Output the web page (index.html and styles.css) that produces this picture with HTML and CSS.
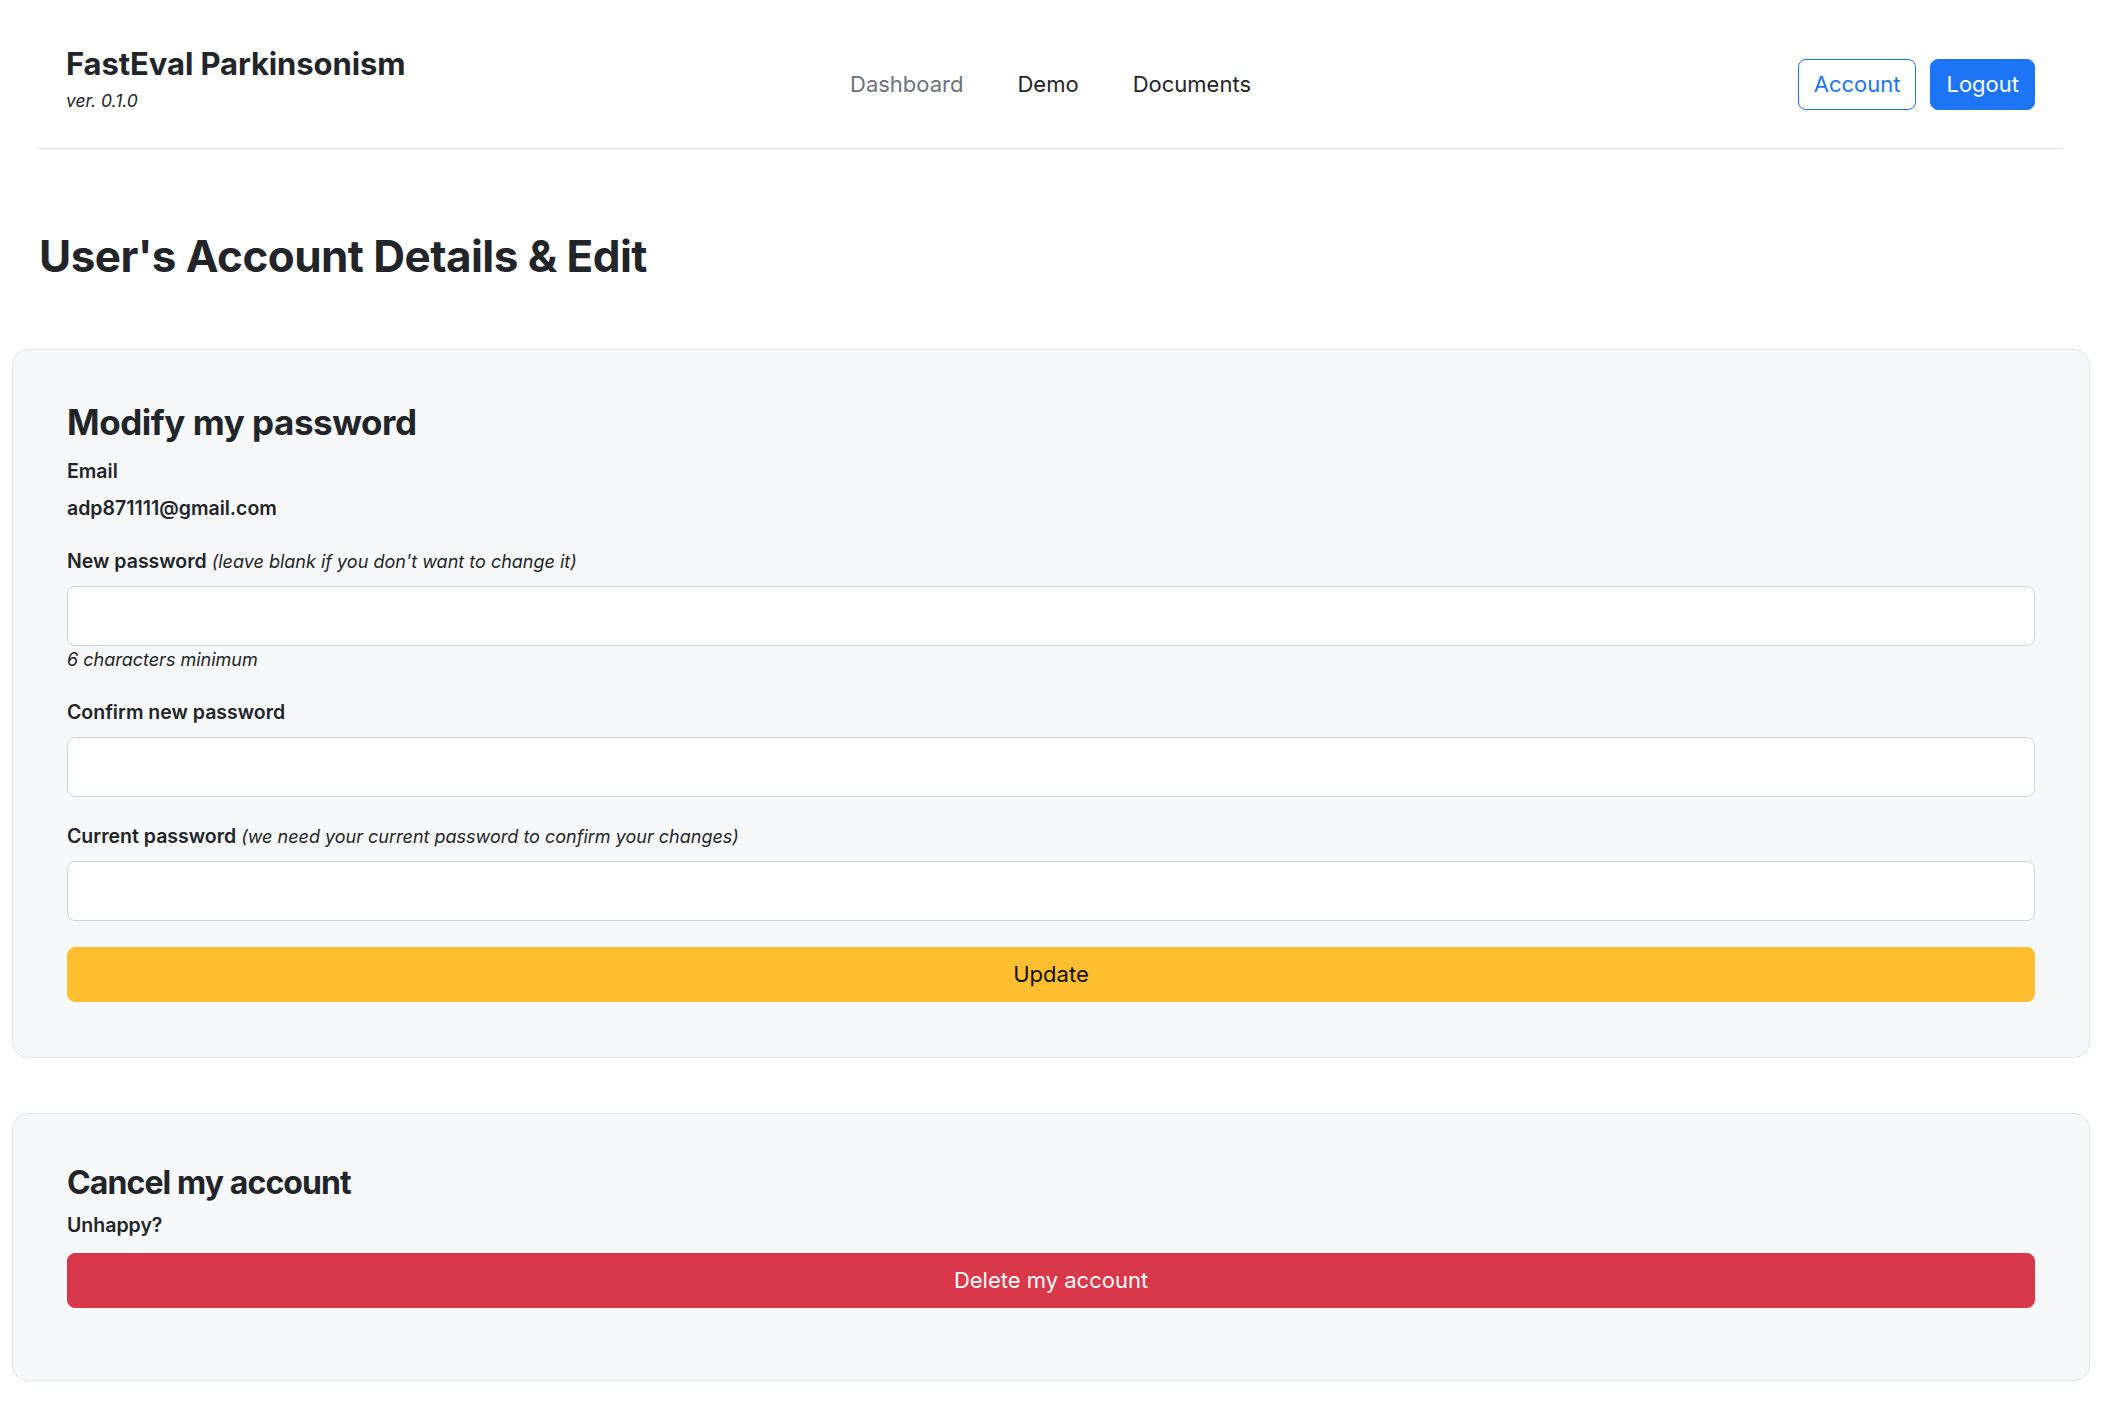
FILE: index.html
```html
<!DOCTYPE html>
<html lang="en">
<head>
<meta charset="utf-8">
<title>FastEval Parkinsonism - Account</title>
<link rel="stylesheet" href="styles.css">
</head>
<body>
<header class="topbar">
  <div class="brand">
    <div class="brand-name">FastEval Parkinsonism</div>
    <div class="brand-version">ver. 0.1.0</div>
  </div>
  <nav class="nav">
    <a class="nav-link muted" href="#">Dashboard</a>
    <a class="nav-link" href="#">Demo</a>
    <a class="nav-link" href="#">Documents</a>
  </nav>
  <div class="actions">
    <a class="btn btn-outline" href="#">Account</a>
    <a class="btn btn-primary" href="#">Logout</a>
  </div>
</header>

<main class="main">
  <h1 class="page-title">User's Account Details &amp; Edit</h1>

  <section class="card">
    <h2 class="card-title">Modify my password</h2>
    <div class="field-label">Email</div>
    <div class="static-value">adp871111@gmail.com</div>

    <label class="field-label">New password <em class="hint">(leave blank if you don't want to change it)</em></label>
    <input class="input" type="password">
    <div class="form-text">6 characters minimum</div>

    <label class="field-label">Confirm new password</label>
    <input class="input" type="password">

    <label class="field-label">Current password <em class="hint">(we need your current password to confirm your changes)</em></label>
    <input class="input input-last" type="password">

    <button class="btn-block btn-warning">Update</button>
  </section>

  <section class="card card-danger">
    <h3 class="card-subtitle">Cancel my account</h3>
    <div class="field-label unhappy">Unhappy?</div>
    <button class="btn-block btn-danger">Delete my account</button>
  </section>
</main>
</body>
</html>
```

FILE: styles.css
```css
* { box-sizing: border-box; }

body {
  margin: 0;
  background: #ffffff;
  color: #212529;
  font-family: Inter, "Noto Sans", "Liberation Sans", sans-serif;
}

.topbar {
  margin: 0 45px 0 39px;
  padding: 42px 28px 21px 27px;
  border-bottom: 1px solid #dfe1e5;
  display: grid;
  grid-template-columns: 1fr auto 1fr;
  align-items: center;
}

.brand {
  margin: 3px 0 13px;
}

.brand-name {
  font-size: 31px;
  font-weight: 700;
  line-height: 1.2;
  letter-spacing: -0.1px;
}

.brand-version {
  margin-top: 6px;
  font-size: 17.5px;
  font-style: italic;
  line-height: 1.5;
}

.nav {
  display: flex;
  gap: 54px;
}

.nav-link {
  font-size: 22px;
  line-height: 1.5;
  color: #212529;
  text-decoration: none;
}

.nav-link.muted {
  color: #6c737c;
}

.actions {
  display: flex;
  justify-content: flex-end;
  gap: 14px;
}

.btn {
  display: inline-block;
  font-size: 22px;
  line-height: 1.5;
  padding: 8px 15px;
  border: 1px solid #1d74f5;
  border-radius: 8px;
  text-decoration: none;
}

.btn-outline {
  color: #1d74f5;
  background: #ffffff;
}

.btn-primary {
  color: #ffffff;
  background: #1d74f5;
}

.main {
  padding: 0 18px 0 12px;
}

.page-title {
  margin: 81px 0 66px 27px;
  font-size: 44px;
  font-weight: 700;
  line-height: 1.2;
  letter-spacing: -0.55px;
}

.card {
  background: #f7f8fa;
  border: 1px solid #e1e3e6;
  border-radius: 16px;
  padding: 51px 54px 55px;
}

.card-danger {
  margin-top: 55px;
  padding-top: 50px;
  padding-bottom: 72px;
}

.card-title {
  margin: 0 0 14px;
  font-size: 35px;
  font-weight: 700;
  line-height: 1.2;
  letter-spacing: -0.45px;
}

.card-subtitle {
  margin: 0 0 8px;
  font-size: 32px;
  font-weight: 700;
  line-height: 1.2;
  letter-spacing: -0.9px;
}

.field-label {
  display: block;
  font-size: 19.5px;
  font-weight: 600;
  line-height: 1.5;
  margin-bottom: 10px;
}

.hint {
  font-size: 18px;
  font-weight: 400;
  font-style: italic;
}

.static-value {
  font-size: 19.5px;
  font-weight: 600;
  line-height: 1.5;
  margin: -2px 0 23px;
}

.input {
  display: block;
  width: 100%;
  height: 60px;
  margin: 0 0 25px;
  background: #ffffff;
  border: 1px solid #cfd3d9;
  border-radius: 8px;
  font-size: 22px;
}

.input.input-last {
  margin-bottom: 26px;
}

.input + .form-text {
  margin-top: -25px;
}

.form-text {
  font-size: 18px;
  font-style: italic;
  line-height: 1.5;
  margin-bottom: 25px;
}

.unhappy {
  margin-bottom: 13px;
}

.btn-block {
  display: block;
  width: 100%;
  font-family: inherit;
  font-size: 22px;
  line-height: 1.5;
  padding: 10px 0;
  border: 1px solid transparent;
  border-radius: 8px;
  text-align: center;
}

.btn-warning {
  background: #fdbf2f;
  border-color: #fdbf2f;
  color: #111111;
}

.btn-danger {
  background: #d9374a;
  border-color: #d9374a;
  color: #ffffff;
}
```
